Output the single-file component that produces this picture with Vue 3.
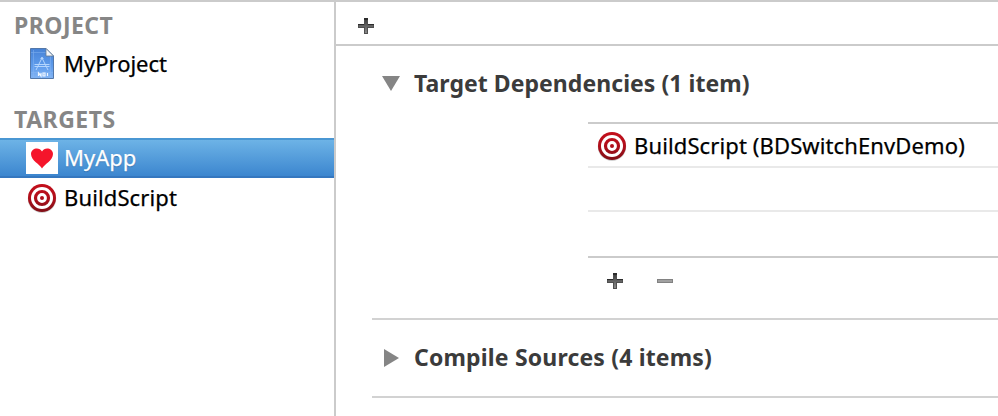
<script setup>
import { h } from 'vue'

const TargetIcon = () =>
  h('svg', { width: 32, height: 32, viewBox: '0 0 32 32' }, [
    h('defs', [
      h('linearGradient', { id: 'ring', x1: 0, y1: 2, x2: 0, y2: 30, gradientUnits: 'userSpaceOnUse' }, [
        h('stop', { offset: '0', 'stop-color': '#c40f1b' }),
        h('stop', { offset: '0.5', 'stop-color': '#b00f1b' }),
        h('stop', { offset: '1', 'stop-color': '#800f17' }),
      ]),
    ]),
    h('circle', { cx: 16, cy: 16.7, r: 14.2, fill: '#000', opacity: 0.18 }),
    h('circle', { cx: 16, cy: 16, r: 14, fill: 'url(#ring)' }),
    h('circle', { cx: 16, cy: 16, r: 11, fill: '#fff' }),
    h('circle', { cx: 16, cy: 16, r: 6.5, fill: 'none', stroke: 'url(#ring)', 'stroke-width': 3.2 }),
    h('circle', { cx: 16, cy: 16, r: 2, fill: 'url(#ring)' }),
  ])

const PlusIcon = () =>
  h('svg', { width: 16, height: 16, viewBox: '0 0 16 16' }, [
    h('defs', [
      h('linearGradient', { id: 'plus', x1: 0, y1: 0, x2: 0, y2: 1 }, [
        h('stop', { offset: '0', 'stop-color': '#404040' }),
        h('stop', { offset: '1', 'stop-color': '#8a8a8a' }),
      ]),
    ]),
    h('path', { d: 'M6 0h4v6h6v4h-6v6H6v-6H0V6h6z', fill: '#505050' }),
    h('path', { d: 'M6 0h4v2H6zM0 6h6v1H0zM10 6h6v1h-6z', fill: '#2c2c2c' }),
    h('path', { d: 'M7 2h2v5h6v2H9v6H7V9H1V7h6z', fill: 'url(#plus)' }),
  ])
</script>

<template>
  <div class="window">
    <aside class="sidebar">
      <h2 class="group project">PROJECT</h2>
      <div class="row">
        <svg class="icon" width="32" height="32" viewBox="0 0 32 32">
          <defs>
            <linearGradient id="doc" x1="0" y1="0" x2="0" y2="1">
              <stop offset="0" stop-color="#4682d6" />
              <stop offset="0.6" stop-color="#5f9cec" />
              <stop offset="1" stop-color="#82b4f4" />
            </linearGradient>
          </defs>
          <path d="M4.500 .5H20l7.500 7.500V30.500h-23z" fill="url(#doc)" stroke="#5378aa" />
          <path d="M7.500 2v27M24.500 8v21M5 4.500h15M5 24.500h22" stroke="#8bb9f3" stroke-width=".7" opacity=".65" />
          <path d="M20 .5V8h7.500z" fill="#f2f5f9" stroke="#647991" stroke-width=".8" />
          <path d="M15.500 9l6.500 13M16.500 9L10 22M8.500 18.500h15M8.500 16.500h15M14.500 10.500h3" fill="none" stroke="#b4d5fd" stroke-width="1" />
          <path d="M12.500 28v-3l2.500 3v-3M17 25v3h2v-3zM21.500 25v3" fill="none" stroke="#eef6ff" stroke-width="1.200" />
        </svg>
        <span class="label">MyProject</span>
      </div>
      <h2 class="group targets">TARGETS</h2>
      <div class="row selected">
        <svg class="icon" width="32" height="32" viewBox="0 0 32 32">
          <rect width="32" height="32" fill="#fff" />
          <path d="M16 26.500C14 22.500 5 18.500 5 12c0-6 8.500-7.500 11-2.500C18.500 4.500 27 6 27 12c0 6.500-9 10.500-11 14.500z" fill="#f5152b" />
        </svg>
        <span class="label">MyApp</span>
      </div>
      <div class="row">
        <TargetIcon class="icon" />
        <span class="label script">BuildScript</span>
      </div>
    </aside>
    <main class="main">
      <div class="toolbar"><PlusIcon /></div>
      <div class="phases">
        <section class="phase open">
          <header class="title">
            <svg class="arrow" width="18" height="18" viewBox="0 0 18 18"><path d="M0 1h18L9 16z" fill="#858585" /></svg>
            <span class="label dependencies">Target Dependencies (1 item)</span>
          </header>
          <div class="list">
            <div class="item">
              <TargetIcon />
              <span class="label script">BuildScript (BDSwitchEnvDemo)</span>
            </div>
            <div class="item"></div>
            <div class="item last"></div>
          </div>
          <div class="actions">
            <PlusIcon />
            <svg width="16" height="16" viewBox="0 0 16 16"><path d="M0 6h16v4H0z" fill="#828282" /><path d="M1 7h14v2H1z" fill="#a0a0a0" /></svg>
          </div>
        </section>
        <section class="phase closed">
          <header class="title">
            <svg class="arrow" width="18" height="18" viewBox="0 0 18 18"><path d="M2 0v18l15-9z" fill="#858585" /></svg>
            <span class="label sources">Compile Sources (4 items)</span>
          </header>
        </section>
      </div>
    </main>
  </div>
</template>

<style>
body {
  margin: 0;
  overflow: hidden;
  background: #fff;
}
</style>

<style scoped>
.window {
  box-sizing: border-box;
  display: flex;
  width: 998px;
  height: 416px;
  overflow: hidden;
  border-top: 2px solid #cbcbcb;
  background: #fff;
  color: #000;
  font: 22px/40px "Noto Sans", sans-serif;
  white-space: nowrap;
  -webkit-text-stroke: 0.25px currentColor;
}
svg {
  display: block;
  flex: none;
}
.sidebar {
  flex: none;
  width: 334px;
  border-right: 2px solid #cbcbcb;
}
.group {
  margin: 0;
  padding-left: 14px;
  color: #868686;
  font-size: 23px;
  font-weight: 700;
  -webkit-text-stroke: 0;
}
.project {
  height: 39px;
  padding-top: 3px;
  letter-spacing: 0.45px;
}
.targets {
  height: 39px;
  padding-top: 15px;
  letter-spacing: 0.5px;
}
.row {
  box-sizing: border-box;
  display: flex;
  align-items: center;
  gap: 6px;
  height: 40px;
  padding-left: 26px;
}
.label {
  padding-bottom: 2px;
}
.script {
  letter-spacing: 0.12px;
}
.selected {
  border-top: 2px solid #4a97d3;
  border-bottom: 2px solid #3577bf;
  background: linear-gradient(#6db3e6, #3c86cf);
  color: #fff;
  text-shadow: 0 1px 1px rgba(25, 75, 130, 0.5);
}
.main {
  flex: 1;
  min-width: 0;
}
.toolbar {
  height: 26px;
  padding: 16px 0 0 22px;
  border-bottom: 2px solid #cbcbcb;
}
.phases {
  padding-left: 36px;
}
.phase {
  border-bottom: 2px solid #d2d2d2;
}
.open {
  height: 272px;
}
.closed {
  height: 76px;
}
.title {
  display: flex;
  align-items: center;
  gap: 14px;
  box-sizing: border-box;
  height: 58px;
  padding: 18px 0 0 10px;
  color: #3b3b3b;
  font-size: 23px;
  font-weight: 700;
  -webkit-text-stroke: 0;
}
.dependencies {
  letter-spacing: 0.05px;
}
.sources {
  letter-spacing: 0.17px;
}
.list {
  margin: 18px 0 0 216px;
  border-top: 2px solid #cbcbcb;
  border-bottom: 2px solid #cbcbcb;
}
.item {
  box-sizing: border-box;
  display: flex;
  align-items: center;
  gap: 6px;
  height: 44px;
  padding: 2px 0 0 8px;
  border-bottom: 2px solid #e9e9e9;
}
.last {
  border-bottom: 0;
}
.actions {
  display: flex;
  gap: 34px;
  padding: 15px 0 0 235px;
}
</style>
